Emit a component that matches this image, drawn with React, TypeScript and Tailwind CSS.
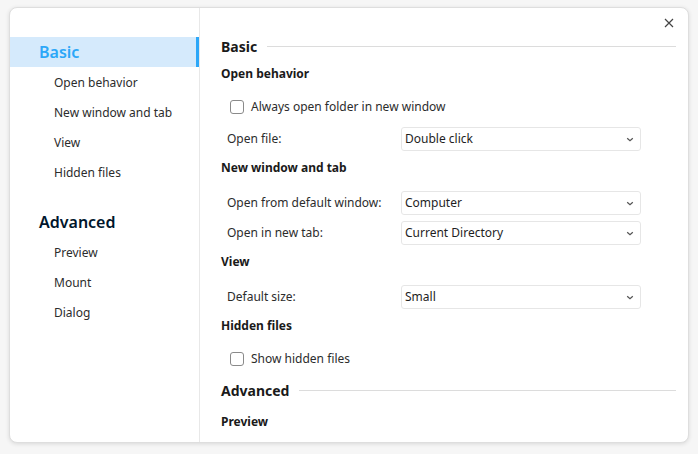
import React from 'react';

const font = { fontFamily: '"Noto Sans", "Liberation Sans", sans-serif' };

const Chevron = () => (
  <svg width="8" height="5" viewBox="0 0 8 5" className="text-[#555]">
    <path d="M1.2 1.2 L4 3.8 L6.8 1.2" fill="none" stroke="currentColor" strokeWidth="1.2" />
  </svg>
);

const Select = ({ value }: { value: string }) => (
  <div className="flex h-[24px] w-[240px] items-center justify-between rounded-[3px] border border-[#e6e6e6] bg-white pl-[3px] pr-[6px] text-[12px] text-[#1e1e1e]">
    <span>{value}</span>
    <Chevron />
  </div>
);

const Checkbox = ({ label, className = '' }: { label: string; className?: string }) => (
  <div className={`flex h-[30px] items-center pl-[9px] ${className}`}>
    <span className="h-[14px] w-[14px] rounded-[3px] border border-[#8a8a8a] bg-white" />
    <span className="ml-[7px] text-[12px] text-[#2c2c2c]">{label}</span>
  </div>
);

const Row = ({ label, value, className = '' }: { label: string; value: string; className?: string }) => (
  <div className={`flex h-[24px] items-center pl-[6px] ${className}`}>
    <span className="w-[174px] text-[12px] text-[#2c2c2c]">{label}</span>
    <Select value={value} />
  </div>
);

const Group = ({ title, className = '' }: { title: string; className?: string }) => (
  <div className={`flex h-[20px] items-center text-[12px] font-bold text-[#1a1a1a] ${className}`}>{title}</div>
);

const Section = ({ title, className = '' }: { title: string; className?: string }) => (
  <div className={`flex h-[20px] items-center gap-[10px] ${className}`}>
    <span className="text-[14px] font-bold text-[#1a1a1a]">{title}</span>
    <div className="h-px flex-1 bg-[#dcdcdc]" />
  </div>
);

const NavItem = ({ label }: { label: string }) => (
  <div className="flex h-[30px] items-center pl-[44px] pt-[2px] text-[12px] text-[#2c2c2c]">{label}</div>
);

export default function App() {
  return (
    <div className="h-[454px] w-[698px] bg-[#f6f6f6] pl-[9px] pt-[7px]" style={font}>
      <div className="flex h-[436px] w-[680px] overflow-hidden rounded-[8px] border border-[#dedede] bg-white shadow-[0_1px_4px_rgba(0,0,0,0.12)]">
        <div className="w-[190px] shrink-0 border-r border-[#e8e8e8] pt-[29px]">
          <div className="flex h-[30px] items-center justify-between bg-[#d5eafc]">
            <span className="pl-[29px] text-[16px] font-semibold text-[#2ca7f8]">Basic</span>
            <span className="h-full w-[3px] bg-[#2ca7f8]" />
          </div>
          <NavItem label="Open behavior" />
          <NavItem label="New window and tab" />
          <NavItem label="View" />
          <NavItem label="Hidden files" />
          <div className="mt-[20px] flex h-[30px] items-center pl-[29px] text-[16px] font-semibold text-[#00162c]">Advanced</div>
          <NavItem label="Preview" />
          <NavItem label="Mount" />
          <NavItem label="Dialog" />
        </div>
        <div className="flex min-w-0 flex-1 flex-col">
          <div className="flex h-[28px] shrink-0 items-center justify-end pr-[14px] pt-[2px]">
            <svg width="10" height="10" viewBox="0 0 10 10" className="text-[#444]">
              <path d="M1 1 L9 9 M9 1 L1 9" stroke="currentColor" strokeWidth="1.2" />
            </svg>
          </div>
          <div className="pl-[21px] pr-[12px]">
            <Section title="Basic" />
            <Group title="Open behavior" className="mt-[8px]" />
            <Checkbox label="Always open folder in new window" className="mt-[8px]" />
            <Row label="Open file:" value="Double click" className="mt-[5px]" />
            <Group title="New window and tab" className="mt-[7px]" />
            <Row label="Open from default window:" value="Computer" className="mt-[13px]" />
            <Row label="Open in new tab:" value="Current Directory" className="mt-[6px]" />
            <Group title="View" className="mt-[7px]" />
            <Row label="Default size:" value="Small" className="mt-[13px]" />
            <Group title="Hidden files" className="mt-[7px]" />
            <Checkbox label="Show hidden files" className="mt-[8px]" />
            <Section title="Advanced" className="mt-[6px]" />
            <Group title="Preview" className="mt-[12px]" />
          </div>
        </div>
      </div>
    </div>
  );
}
